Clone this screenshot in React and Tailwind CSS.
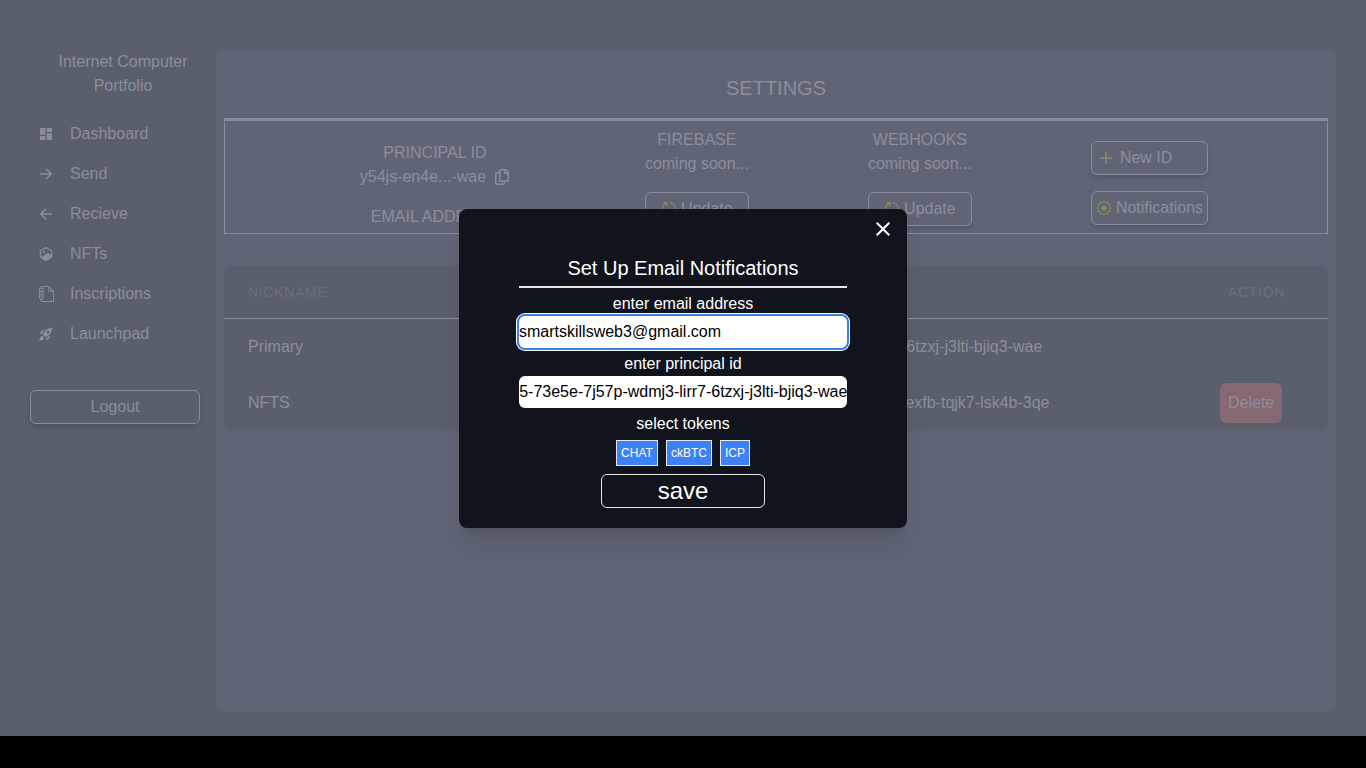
import { useEffect, useRef } from "react";
import { MdClose, MdDashboard, MdRocketLaunch } from "react-icons/md";
import { TfiWrite } from "react-icons/tfi";
import { FaRegCopy } from "react-icons/fa";
import { RxUpdate } from "react-icons/rx";

const PRINCIPAL = "y54js-en4ei-3qam5-73e5e-7j57p-wdmj3-lirr7-6tzxj-j3lti-bjiq3-wae";

function LineIcon({ children }) {
  return (
    <svg viewBox="0 0 16 16" width="16" height="16" fill="none" stroke="currentColor" strokeWidth="1.5" aria-hidden="true">
      {children}
    </svg>
  );
}

function SendIcon() {
  return (
    <LineIcon>
      <path d="M2 8h11.2M8 2.8 13.2 8 8 13.2" />
    </LineIcon>
  );
}

function ReceiveIcon() {
  return (
    <LineIcon>
      <path d="M14 8H2.8M8 2.8 2.8 8 8 13.2" />
    </LineIcon>
  );
}

function NftIcon() {
  return (
    <LineIcon>
      <path d="M8 1.6 13.6 4.8v6.4L8 14.4 2.4 11.2V4.8z" strokeWidth="1.3" />
      <circle cx="5.9" cy="6" r="1.1" fill="currentColor" stroke="none" />
      <path d="M3 11.3 10 6.9 13.4 9.2V11.2L8 14.3z" fill="currentColor" stroke="none" />
    </LineIcon>
  );
}

function PlusIcon() {
  return (
    <LineIcon>
      <path d="M8 2v12M2 8h12" strokeWidth="1.5" />
    </LineIcon>
  );
}

function CirclePlusIcon() {
  return (
    <LineIcon>
      <circle cx="8" cy="8" r="6.4" strokeWidth="1.1" />
      <path d="M8 5v6M5 8h6" strokeWidth="1.8" />
    </LineIcon>
  );
}

const NAV = [
  { label: "Dashboard", Icon: MdDashboard },
  { label: "Send", Icon: SendIcon },
  { label: "Recieve", Icon: ReceiveIcon },
  { label: "NFTs", Icon: NftIcon },
  { label: "Inscriptions", Icon: TfiWrite },
  { label: "Launchpad", Icon: MdRocketLaunch },
];

const ROWS = [
  { nickname: "Primary", id: PRINCIPAL },
  { nickname: "NFTS", id: "k3vbn-4iodc-zr6fp-u5lxa-2ygte-h7iqd-o2nsv-rexfb-tqjk7-lsk4b-3qe", removable: true },
];

function Sidebar() {
  return (
    <aside className="flex w-[186px] shrink-0 flex-col">
      <h1 className="px-6 text-center">Internet Computer Portfolio</h1>
      <nav className="mt-4">
        {NAV.map(({ label, Icon }) => (
          <a key={label} href="#" className="flex h-10 items-center gap-4 pl-2">
            <Icon size={16} />
            {label}
          </a>
        ))}
      </nav>
      <button type="button" className="mt-9 mr-4 h-[34px] rounded-md border border-[#898c9a] shadow-md">
        Logout
      </button>
    </aside>
  );
}

function ServiceColumn({ title }) {
  return (
    <div className="flex flex-col items-center self-center">
      <h3>{title}</h3>
      <p>coming soon...</p>
      <button
        type="button"
        className="mt-4 flex h-[34px] w-[104px] items-center justify-center gap-1 rounded-md border border-[#898c9a] shadow-md"
      >
        <RxUpdate size={16} className="text-[#8a8f60]" />
        Update
      </button>
    </div>
  );
}

function AccountPanel() {
  return (
    <section className="flex justify-evenly border border-t-[3px] border-[#888b98] py-1">
      <div className="flex w-[182px] flex-col items-center pt-4">
        <h3>PRINCIPAL ID</h3>
        <div className="flex items-center gap-2">
          <span>y54js-en4e...-wae</span>
          <button type="button" aria-label="Copy principal id">
            <FaRegCopy size={16} />
          </button>
        </div>
        <h3 className="mt-4">EMAIL ADDRESS</h3>
      </div>
      <ServiceColumn title="FIREBASE" />
      <ServiceColumn title="WEBHOOKS" />
      <div className="flex flex-col gap-4 pt-4">
        <button type="button" className="flex h-[34px] items-center gap-1.5 rounded-md border border-[#898c9a] px-1.5 shadow-md">
          <span className="text-[#8a8f60]">
            <PlusIcon />
          </span>
          New ID
        </button>
        <button type="button" className="flex h-[34px] items-center gap-1 rounded-md border border-[#898c9a] px-1 shadow-md">
          <span className="text-[#8a8f60]">
            <CirclePlusIcon />
          </span>
          Notifications
        </button>
      </div>
    </section>
  );
}

function PrincipalTable() {
  return (
    <div className="mt-8 overflow-hidden rounded-lg bg-[#5a5f6c]">
      <table className="w-full table-fixed border-separate border-spacing-0 text-left">
        <thead>
          <tr className="h-[53px] text-sm tracking-wider text-[#6b6f7d]">
            <th className="w-[339px] border-b border-[#888b98] px-6 font-normal">NICKNAME</th>
            <th className="border-b border-[#888b98] px-6 font-normal">PRINCIPAL ID</th>
            <th className="w-[124px] border-b border-[#888b98] px-6 font-normal">ACTION</th>
          </tr>
        </thead>
        <tbody>
          {ROWS.map((row) => (
            <tr key={row.nickname} className="h-14">
              <td className="px-6">{row.nickname}</td>
              <td className="px-6 whitespace-nowrap">{row.id}</td>
              <td className="px-4">
                {row.removable && (
                  <button type="button" className="h-10 rounded-md bg-[#866873] px-2">
                    Delete
                  </button>
                )}
              </td>
            </tr>
          ))}
        </tbody>
      </table>
    </div>
  );
}

function NotificationDialog() {
  const principalRef = useRef(null);

  useEffect(() => {
    const field = principalRef.current;
    field.scrollLeft = field.scrollWidth;
  }, []);

  return (
    <div
      role="dialog"
      aria-modal="true"
      aria-labelledby="dialog-title"
      className="relative w-full max-w-md rounded-lg bg-[#11131d] px-[60px] pt-[45px] pb-5 text-white shadow-xl"
    >
      <button type="button" aria-label="Close" className="absolute top-2 right-3">
        <MdClose size={24} />
      </button>
      <form className="flex flex-col text-center" onSubmit={(e) => e.preventDefault()}>
        <h2 id="dialog-title" className="border-b-2 border-gray-200 pb-1 text-xl">
          Set Up Email Notifications
        </h2>
        <label htmlFor="email" className="mt-1">
          enter email address
        </label>
        <input
          id="email"
          type="text"
          defaultValue="smartskillsweb3@gmail.com"
          className="h-8 rounded-md bg-white text-black shadow-[0_0_0_2px_#3a80e0,0_0_0_3px_#ffffff] outline-none"
        />
        <label htmlFor="principal" className="mt-1">
          enter principal id
        </label>
        <input
          id="principal"
          ref={principalRef}
          type="text"
          defaultValue={PRINCIPAL}
          className="h-8 rounded-md bg-white text-black outline-none"
        />
        <p className="mt-1">select tokens</p>
        <div className="mt-1 flex justify-center gap-2">
          {["CHAT", "ckBTC", "ICP"].map((token) => (
            <button key={token} type="button" className="border border-gray-200 bg-[#3b82f6] p-1 text-xs">
              {token}
            </button>
          ))}
        </div>
        <button type="submit" className="mt-2 w-1/2 self-center rounded-md border border-gray-200 text-2xl">
          save
        </button>
      </form>
    </div>
  );
}

export default function App() {
  return (
    <div className="min-h-screen bg-black font-[Arial,'Liberation_Sans',sans-serif] text-base text-[#8b8e99]">
      <div className="relative flex min-h-[calc(100vh-32px)] bg-[#5a5f6c] px-[30px] pt-[50px] pb-6">
        <Sidebar />
        <main className="min-w-0 flex-1 rounded-lg bg-[#606575] p-2">
          <h2 className="py-4 text-center text-xl">SETTINGS</h2>
          <AccountPanel />
          <PrincipalTable />
        </main>
        <div className="absolute inset-0 flex items-center justify-center">
          <NotificationDialog />
        </div>
      </div>
    </div>
  );
}
